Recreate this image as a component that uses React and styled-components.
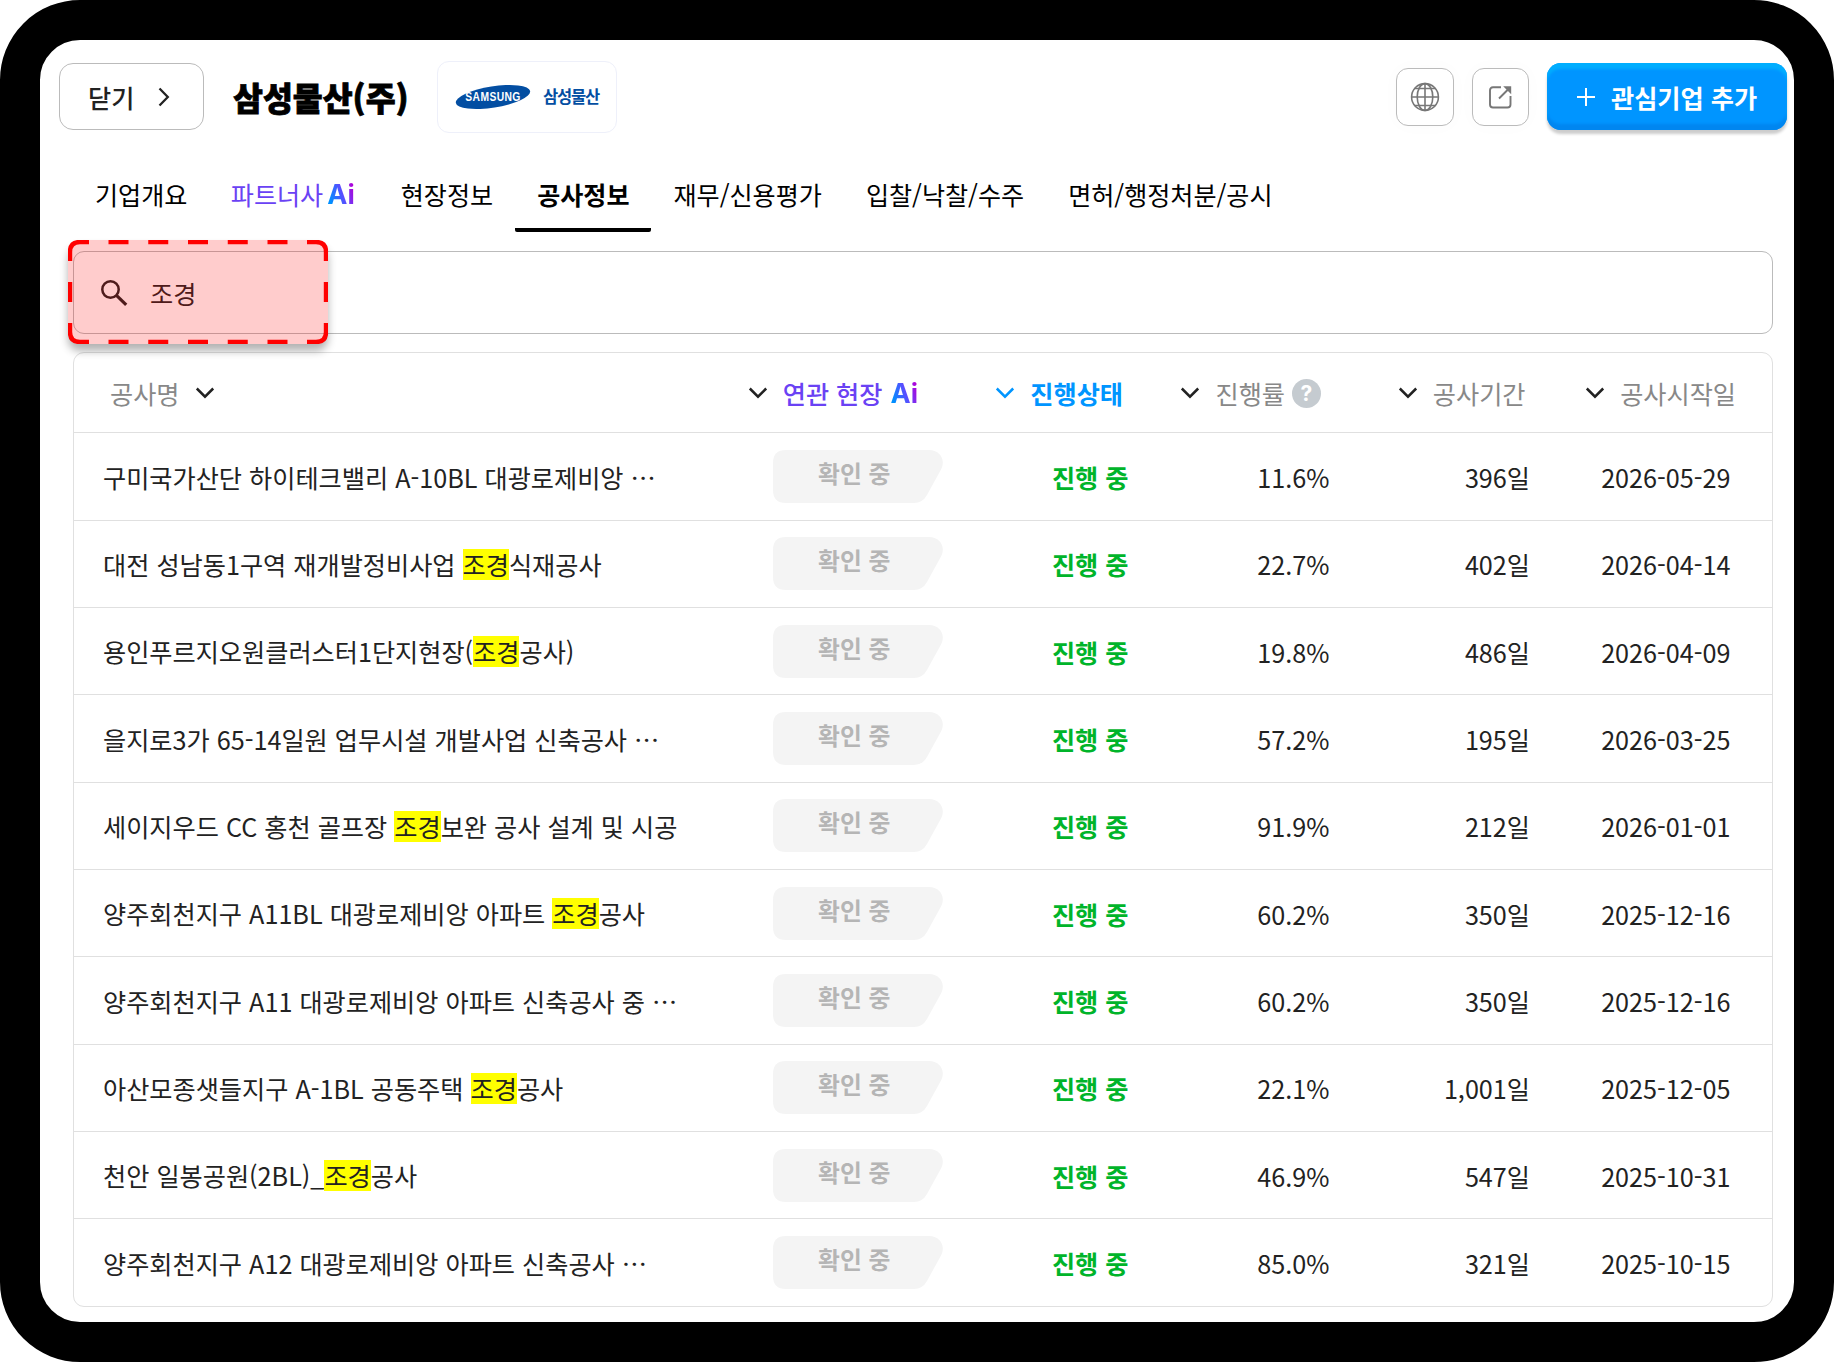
import React, { useState } from "react";
import styled, { createGlobalStyle, css } from "styled-components";

const tabs = [
  { id: "summary", label: "기업개요" },
  { id: "partner", label: "파트너사", ai: true },
  { id: "site", label: "현장정보" },
  { id: "work", label: "공사정보" },
  { id: "finance", label: "재무/신용평가" },
  { id: "bid", label: "입찰/낙찰/수주" },
  { id: "license", label: "면허/행정처분/공시" },
];

const rows = [
  { name: "구미국가산단 하이테크밸리 A-10BL 대광로제비앙 ⋯", rate: "11.6%", days: "396일", start: "2026-05-29" },
  { name: "대전 성남동1구역 재개발정비사업 조경식재공사", rate: "22.7%", days: "402일", start: "2026-04-14" },
  { name: "용인푸르지오원클러스터1단지현장(조경공사)", rate: "19.8%", days: "486일", start: "2026-04-09" },
  { name: "을지로3가 65-14일원 업무시설 개발사업 신축공사 ⋯", rate: "57.2%", days: "195일", start: "2026-03-25" },
  { name: "세이지우드 CC 홍천 골프장 조경보완 공사 설계 및 시공", rate: "91.9%", days: "212일", start: "2026-01-01" },
  { name: "양주회천지구 A11BL 대광로제비앙 아파트 조경공사", rate: "60.2%", days: "350일", start: "2025-12-16" },
  { name: "양주회천지구 A11 대광로제비앙 아파트 신축공사 중 ⋯", rate: "60.2%", days: "350일", start: "2025-12-16" },
  { name: "아산모종샛들지구 A-1BL 공동주택 조경공사", rate: "22.1%", days: "1,001일", start: "2025-12-05" },
  { name: "천안 일봉공원(2BL)_조경공사", rate: "46.9%", days: "547일", start: "2025-10-31" },
  { name: "양주회천지구 A12 대광로제비앙 아파트 신축공사 ⋯", rate: "85.0%", days: "321일", start: "2025-10-15" },
];

const Chevron = ({ color = "#222" }) => (
  <svg width="20" height="12" viewBox="0 0 20 12" fill="none">
    <path d="M1.8 1.5 L10 9.7 L18.2 1.5" stroke={color} strokeWidth="2.5" />
  </svg>
);

const SamsungMark = () => (
  <svg width="76" height="28" viewBox="0 0 76 28">
    <ellipse cx="38" cy="14" rx="37.6" ry="10.6" fill="#034ea2" transform="rotate(-9 38 14)" />
    <text
      x="12"
      y="18"
      transform="scale(0.86 1)"
      fill="#fff"
      fontFamily="Liberation Sans"
      fontSize="12"
      fontWeight="700"
      textLength="64"
    >
      SAMSUNG
    </text>
  </svg>
);

const GlobeIcon = () => (
  <svg width="30" height="30" viewBox="0 0 30 30" fill="none" stroke="#777" strokeWidth="1.6">
    <circle cx="15" cy="15" r="13.4" />
    <ellipse cx="15" cy="15" rx="7.8" ry="13.4" />
    <path d="M15 1.6 V28.4 M1.6 15 H28.4 M4.5 6.5 H25.5 M4.5 23.5 H25.5" />
  </svg>
);

const ShareIcon = () => (
  <svg width="24" height="24" viewBox="0 0 24 24" fill="none" stroke="#777" strokeWidth="1.9">
    <path d="M13 2.3 H5 Q2 2.3 2 5.3 V19.5 Q2 22.5 5 22.5 H19.5 Q22.5 22.5 22.5 19.5 V11" />
    <path d="M11 13.5 L20 4.5" />
    <path d="M15.2 1.3 H23.2 V9.3 Z" fill="#777" stroke="none" />
  </svg>
);

const SearchIcon = () => (
  <svg width="28" height="28" viewBox="0 0 28 28" fill="none" stroke="#222">
    <circle cx="10.5" cy="10.5" r="8.2" strokeWidth="2.5" />
    <path d="M16.2 16.2 L26.2 25.8" strokeWidth="3.2" />
  </svg>
);

const BadgeShape = () => (
  <svg width="170" height="53" viewBox="0 0 170 53">
    <path
      d="M13 0 H156 C167 0 173 10 168 19.5 L154 45 Q149.5 53 141 53 H13 Q0 53 0 40 V13 Q0 0 13 0 Z"
      fill="#f4f4f4"
    />
  </svg>
);

// dashed outline with solid corners
const DashedOutline = () => (
  <svg width="260" height="104" viewBox="0 0 260 104" fill="none" stroke="#f00" strokeWidth="4.4">
    <path d="M2 21 V12 Q2 2 12 2 H21 M239 2 H248 Q258 2 258 12 V21" />
    <path d="M258 83 V92 Q258 102 248 102 H239 M21 102 H12 Q2 102 2 92 V83" />
    <path d="M40.5 2 H220 M40.5 102 H220" strokeDasharray="20 19.75" />
    <path d="M2 42 V62 M258 42 V62" />
  </svg>
);

const App = () => {
  const [tab, setTab] = useState("work");
  const [keyword, setKeyword] = useState("조경");

  const markName = (name) => {
    if (!keyword) return name;
    return name.split(keyword).map((part, i) => (
      <React.Fragment key={i}>
        {i > 0 && <Mark>{keyword}</Mark>}
        {part}
      </React.Fragment>
    ));
  };

  return (
    <>
      <GlobalStyle />
      <Screen lang="ko">
        <Header>
          <CloseButton>
            닫기
            <svg width="12" height="20" viewBox="0 0 12 20" fill="none">
              <path d="M1.5 1.5 L9.8 10 L1.5 18.5" stroke="#222" strokeWidth="2.3" />
            </svg>
          </CloseButton>
          <Title>삼성물산(주)</Title>
          <LogoCard>
            <SamsungMark />
            <LogoName>삼성물산</LogoName>
          </LogoCard>
          <Actions>
            <IconButton>
              <GlobeIcon />
            </IconButton>
            <IconButton>
              <ShareIcon />
            </IconButton>
            <AddButton>
              <svg width="18" height="18" viewBox="0 0 18 18">
                <path d="M9 0 V18 M0 9 H18" stroke="#fff" strokeWidth="2" />
              </svg>
              관심기업 추가
            </AddButton>
          </Actions>
        </Header>

        <Tabs>
          {tabs.map((t) => (
            <Tab key={t.id} $active={t.id === tab} $ai={t.ai} onClick={() => setTab(t.id)}>
              {t.label}
              {t.ai && <Ai>Ai</Ai>}
            </Tab>
          ))}
        </Tabs>

        <SearchBox>
          <SearchIcon />
          <SearchInput value={keyword} onChange={(ev) => setKeyword(ev.target.value)} />
          <Highlight>
            <DashedOutline />
          </Highlight>
        </SearchBox>

        <Table>
          <HeadRow>
            <NameHead>
              공사명
              <Chevron />
            </NameHead>
            <HeadCell $right={25} $tone="violet">
              <Chevron />
              <span>연관 현장</span>
              <Ai>Ai</Ai>
            </HeadCell>
            <HeadCell $right={13} $tone="blue">
              <Chevron color="#0095ff" />
              <span>진행상태</span>
            </HeadCell>
            <HeadCell $right={18}>
              <Chevron />
              <span>진행률</span>
              <Help>?</Help>
            </HeadCell>
            <HeadCell $right={13.5}>
              <Chevron />
              <span>공사기간</span>
            </HeadCell>
            <HeadCell $right={36}>
              <Chevron />
              <span>공사시작일</span>
            </HeadCell>
          </HeadRow>
          {rows.map((row, i) => (
            <Row key={i}>
              <NameCell>{markName(row.name)}</NameCell>
              <BadgeCell>
                <BadgeShape />
                <BadgeText>확인 중</BadgeText>
              </BadgeCell>
              <StatusCell>진행 중</StatusCell>
              <Cell $right={9.5}>{row.rate}</Cell>
              <Cell $right={9}>{row.days}</Cell>
              <Cell $right={41.5}>{row.start}</Cell>
            </Row>
          ))}
        </Table>
      </Screen>
    </>
  );
};

export default App;

const GlobalStyle = createGlobalStyle`
  * {
    box-sizing: border-box;
  }
  body {
    margin: 0;
    background: #fff;
    font-family: "Noto Sans CJK KR", sans-serif;
    font-size: 25.2px;
    color: #222;
  }
  button, input {
    font: inherit;
    color: inherit;
  }
  svg {
    display: block;
    flex: none;
  }
`;

const Screen = styled.div`
  width: 1834px;
  height: 1362px;
  border: 40px solid #000;
  border-radius: 80px;
  background: #fff;
  padding-top: 21px;
`;

const Header = styled.header`
  display: flex;
  align-items: center;
  height: 72px;
  padding: 0 7px 0 19px;
`;

const CloseButton = styled.button`
  display: flex;
  align-items: center;
  justify-content: space-between;
  width: 145px;
  height: 67px;
  margin-bottom: 1px;
  padding: 0 33px 0 28px;
  border: 1px solid #bbb;
  border-radius: 14px;
  background: #fff;
  font-weight: 500;
`;

const Title = styled.h1`
  margin: 0 0 2px 29px;
  width: 204px;
  font-size: 32.5px;
  font-weight: 900;
  color: #000;
  white-space: nowrap;
  -webkit-text-stroke: 0.8px #000;
`;

const LogoCard = styled.div`
  display: flex;
  align-items: center;
  width: 180px;
  height: 72px;
  padding-left: 17px;
  border: 1px solid #eef0fa;
  border-radius: 12px;
`;

const LogoName = styled.span`
  margin: 0 0 2px 12px;
  font-size: 16.5px;
  font-weight: 700;
  letter-spacing: -1.2px;
  color: #034ea2;
`;

const Actions = styled.div`
  display: flex;
  align-items: center;
  margin-left: auto;
`;

const IconButton = styled.button`
  display: flex;
  align-items: center;
  justify-content: center;
  width: 57.5px;
  height: 58px;
  margin-right: 18px;
  padding: 0;
  border: 1px solid #bbb;
  border-radius: 12px;
  background: #fff;
  box-shadow: 0 0 20px rgba(0, 0, 0, 0.02);
`;

const AddButton = styled.button`
  display: flex;
  align-items: center;
  width: 240px;
  height: 67px;
  margin-bottom: 1px;
  padding: 0 0 0 30px;
  gap: 16px;
  border: none;
  border-radius: 14px;
  background: #0095ff;
  color: #fff;
  font-weight: 700;
  white-space: nowrap;
  box-shadow: inset 0 6px 3px #00aeff, inset 0 -6px 3px #0086f0, 0 4px 3px rgba(0, 0, 0, 0.2);
`;

const Tabs = styled.nav`
  display: flex;
  height: 99px;
  padding-left: 33px;
  font-size: 25.1px;
`;

const Tab = styled.button`
  display: flex;
  align-items: center;
  padding: 27px 22px 0;
  border: none;
  border-bottom: 4px solid transparent;
  background: none;
  color: #000;
  white-space: nowrap;
  ${({ $active }) =>
    $active &&
    css`
      font-weight: 700;
      background: linear-gradient(#000, #000) bottom / 100% 4px no-repeat border-box;
      border-radius: 2px;
    `}
  ${({ $ai }) =>
    $ai &&
    css`
      color: #6a42f4;
      padding-left: 21.5px;
      padding-right: 24px;
    `}
`;

const Ai = styled.span`
  margin-left: 4px;
  font-family: Inter, sans-serif;
  font-size: 27px;
  font-weight: 700;
  line-height: 1;
  background: linear-gradient(70deg, #0090ff 15%, #5a4cff 55%, #b000d8 90%);
  -webkit-background-clip: text;
  background-clip: text;
  color: transparent;
`;

const SearchBox = styled.div`
  position: relative;
  display: flex;
  align-items: center;
  width: 1700px;
  height: 83px;
  margin: 19px 0 0 33px;
  padding-left: 26px;
  border: 1px solid #bbb;
  border-radius: 11px;
`;

const SearchInput = styled.input`
  flex: 1;
  margin-left: 22px;
  padding: 0;
  border: none;
  outline: none;
  background: none;
`;

const Highlight = styled.div`
  position: absolute;
  left: -6px;
  top: -12px;
  width: 260px;
  height: 104px;
  border-radius: 12px;
  background: rgba(255, 0, 0, 0.2);
  box-shadow: 0 7px 8px rgba(0, 0, 0, 0.3);
  pointer-events: none;
`;

const Table = styled.div`
  width: 1700px;
  margin: 18px 0 0 33px;
  border: 1px solid #e0e0e0;
  border-radius: 11px;
`;

const Row = styled.div`
  display: grid;
  grid-template-columns: 661px 208px 193px 203px 200px 1fr;
  align-items: center;
  height: 87.35px;
  white-space: nowrap;
  border-top: 1px solid #e0e0e0;
`;

const HeadRow = styled(Row)`
  height: 79.4px;
  border-top: none;
  color: #888;
`;

const NameHead = styled.div`
  display: flex;
  align-items: center;
  gap: 15px;
  padding: 0 0 0 36px;
`;

const tones = {
  violet: "#6a42f4",
  blue: "#0095ff",
};

const HeadCell = styled.div`
  display: flex;
  align-items: center;
  justify-content: flex-end;
  padding-right: ${({ $right }) => $right}px;
  color: ${({ $tone }) => tones[$tone] || "inherit"};
  font-weight: ${({ $tone }) => ($tone === "blue" ? 700 : $tone ? 500 : 400)};
  span:first-of-type {
    margin-left: 15px;
  }
  ${Ai} {
    margin: 2px 0 0 8px;
  }
`;

const Help = styled.i`
  display: flex;
  align-items: center;
  justify-content: center;
  width: 29px;
  height: 29px;
  margin: 1px 0 0 7px;
  border-radius: 50%;
  background: #c5cbd0;
  color: #fff;
  font: 700 21px Inter, sans-serif;
`;

const NameCell = styled.div`
  padding: 0 0 0 29px;
`;

const Mark = styled.mark`
  display: inline-block;
  line-height: 31px;
  background: #ff0;
  color: inherit;
`;

const BadgeCell = styled.div`
  display: grid;
  padding-left: 38px;
  > * {
    grid-area: 1 / 1;
  }
`;

const BadgeText = styled.span`
  align-self: center;
  padding: 0 0 8px 45px;
  font-size: 23.8px;
  font-weight: 700;
  color: #b5b5b5;
`;

const Cell = styled.div`
  padding-top: 1px;
  padding-right: ${({ $right }) => $right}px;
  text-align: right;
`;

const StatusCell = styled(Cell)`
  padding-right: 7.5px;
  font-weight: 700;
  color: #00b42a;
`;
